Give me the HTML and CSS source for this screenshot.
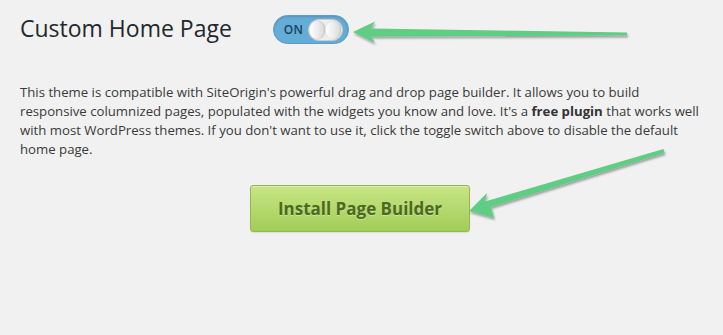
FILE: index.html
```html
<!DOCTYPE html>
<html>
<head>
<meta charset="utf-8">
<link rel="stylesheet" href="styles.css">
</head>
<body>
<div class="page">
  <div class="header">
    <h1 class="title">Custom Home Page</h1>
    <div class="toggle">
      <span class="toggle-label">ON</span>
      <span class="knob"><span class="knob-half"></span><span class="knob-half"></span></span>
    </div>
  </div>
  <p class="desc">This theme is compatible with SiteOrigin's powerful drag and drop page builder. It allows you to build<br>responsive columnized pages, populated with the widgets you know and love. It's a <strong>free plugin</strong> that works well<br>with most WordPress themes. If you don't want to use it, click the toggle switch above to disable the default<br>home page.</p>
  <div class="actions">
    <a class="install-btn">Install Page Builder</a>
  </div>
  <svg class="arrows" width="723" height="335" viewBox="0 0 723 335">
    <defs>
      <filter id="sh" x="-10%" y="-50%" width="120%" height="200%">
        <feDropShadow dx="1" dy="2" stdDeviation="1.2" flood-color="#000" flood-opacity="0.35"/>
      </filter>
    </defs>
    <polygon filter="url(#sh)" fill="#5ecd84" points="353,32 375,21.5 371,28.5 627,32.5 627,35.5 371,36.5 375,43"/>
    <polygon filter="url(#sh)" fill="#5ecd84" points="469,211 487,193 485,201.5 663.4,149.1 664.6,152.9 491,207 494,218"/>
  </svg>
</div>
</body>
</html>
```
FILE: styles.css
```css
html, body {
  margin: 0;
  padding: 0;
  background: #f1f1f1;
}
.page {
  position: relative;
  width: 723px;
  height: 335px;
  padding: 12px 0 0 20px;
  box-sizing: border-box;
  font-family: "Open Sans", "Noto Sans", sans-serif;
  color: #444;
}
.header {
  display: flex;
  align-items: center;
  gap: 41px;
}
.title {
  margin: 0;
  font-size: 23px;
  line-height: 32px;
  font-weight: 400;
  color: #23282d;
}
.toggle {
  display: flex;
  align-items: center;
  justify-content: space-between;
  width: 76px;
  height: 29px;
  box-sizing: border-box;
  padding: 0 5px 0 10px;
  margin-top: 3px;
  background: #65acd6;
  border: 1px solid #5a9dc6;
  border-radius: 15px;
  box-shadow: inset 0 1px 2px rgba(0,0,0,0.15);
}
.toggle-label {
  font-size: 12px;
  font-weight: 600;
  color: #1a4260;
  letter-spacing: 0.3px;
}
.knob {
  display: flex;
  width: 35px;
  height: 22px;
  box-sizing: border-box;
  border-radius: 11px;
  background: #eeeeee;
  border: 1px solid #cccccc;
  overflow: hidden;
  padding: 1px;
  gap: 1px;
}
.knob-half {
  flex: 1;
  border-radius: 10px;
  background: linear-gradient(to right, #ffffff, #d9d9d9);
  box-shadow: inset -1px 0 1px rgba(0,0,0,0.1), 0 0 1px rgba(0,0,0,0.25);
}
.desc {
  margin: 39px 0 0 0;
  width: 700px;
  font-size: 13.2px;
  line-height: 19px;
  color: #3a3a3a;
}
.desc strong {
  font-weight: 700;
  color: #333;
}
.actions {
  display: flex;
  justify-content: center;
  width: 680px;
  margin-top: 26px;
}
.install-btn {
  display: flex;
  align-items: center;
  justify-content: center;
  width: 220px;
  height: 47px;
  box-sizing: border-box;
  border: 1px solid #94b653;
  border-radius: 3px;
  background: linear-gradient(to bottom, #c9e584, #a2cd58);
  box-shadow: inset 0 1px 0 rgba(255,255,255,0.35), 0 1px 1px rgba(0,0,0,0.08);
  font-size: 17px;
  font-weight: 700;
  color: #4c6a1f;
  text-shadow: 0 1px 0 rgba(255,255,255,0.35);
}
.arrows {
  position: absolute;
  left: 0;
  top: 0;
  pointer-events: none;
}
```
